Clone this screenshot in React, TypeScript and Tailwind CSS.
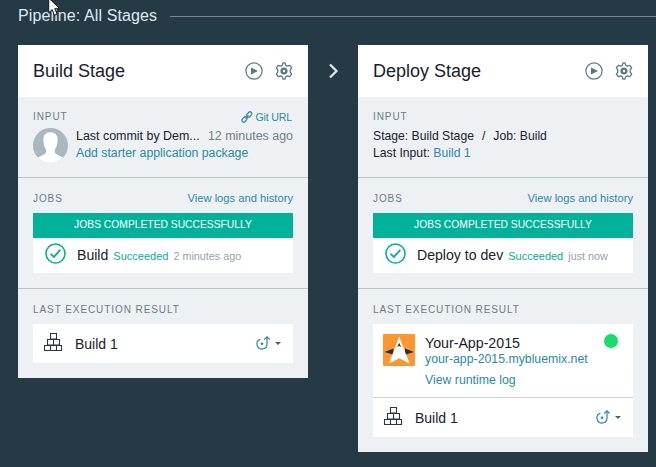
import type { ReactNode } from "react";

function PlayIcon() {
  return (
    <svg width="18" height="18" viewBox="0 0 18 18" fill="none">
      <circle cx="9" cy="9" r="8.1" stroke="#5c7d86" strokeWidth="1.2" />
      <path d="M6 5.4 13 9 6 12.6z" fill="#5a7680" />
    </svg>
  );
}

function GearIcon() {
  return (
    <svg width="18" height="18" viewBox="0 0 18 18" fill="none" stroke="#5c7780">
      <path
        d="M7.3 3.2 8 .9h2l.7 2.300 1.500.9 2.500-.7 2 2.500-1.500 1.900v2.400l1.500 1.900-2 2.500-2.500-.7-1.500.9-.7 2.300H8l-.7-2.300-1.500-.9-2.500.7-2-2.500 1.500-1.900V7.800L1.300 5.900l2-2.500 2.500.7z"
        strokeWidth="1.3"
        strokeLinejoin="round"
      />
      <circle cx="9" cy="9" r="2.400" strokeWidth="2.400" />
    </svg>
  );
}

function LinkIcon() {
  return (
    <svg width="12" height="12" viewBox="0 0 12 12" fill="none" stroke="#3f87a0" strokeWidth="1.300">
      <rect x="-2.9" y="-1.8" width="5.8" height="3.6" rx="1.8" transform="translate(8.3 3.5) rotate(-48)" />
      <rect x="-2.9" y="-1.8" width="5.8" height="3.6" rx="1.8" transform="translate(3.5 8.5) rotate(-48)" />
      <path d="M4.4 7.6 7.4 4.3" />
    </svg>
  );
}

function Avatar() {
  return (
    <svg width="35" height="35" viewBox="0 0 35 35" className="shrink-0">
      <defs>
        <clipPath id="avatar">
          <circle cx="17.5" cy="17.5" r="17.5" />
        </clipPath>
      </defs>
      <g clipPath="url(#avatar)">
        <rect width="35" height="35" fill="#a9b8bf" />
        <path
          d="M17.5 4.300c4.700 0 7.200 3 7.100 7.500 0 4-.7 6.500-2.100 8.700-.8 1.200-.8 3.300-.2 4.500 1 2 5.700 2.800 7.700 4.800V36H5v-6.200c2-2 6.700-2.800 7.700-4.800.6-1.200.6-3.300-.2-4.500-1.400-2.200-2.100-4.700-2.100-8.700-.1-4.500 2.400-7.500 7.100-7.500z"
          fill="#fff"
        />
      </g>
    </svg>
  );
}

function CheckIcon() {
  return (
    <svg width="21" height="21" viewBox="0 0 21 21" fill="none" stroke="#0bae98">
      <circle cx="10.500" cy="10.500" r="9.500" strokeWidth="1.600" />
      <path d="M5.600 10.900 8.900 14l6.400-7.200" strokeWidth="1.900" />
    </svg>
  );
}

function BlocksIcon() {
  return (
    <svg width="20" height="20" viewBox="0 0 20 20" fill="none" stroke="#2c3540" strokeWidth="1.100">
      <path d="M7.500 1.500h6v5.500h-6zM4.500 7.500h12v5.500h-12zM10.500 7.500v5.500M1.500 13.500h17v5h-17zM7.500 13.500v5M13.500 13.500v5" />
    </svg>
  );
}

function DeployMenu() {
  return (
    <div className="flex items-center gap-[5px]">
      <svg width="14" height="14" viewBox="0 0 14 14" fill="none" stroke="#2c87a3" strokeWidth="1.200" className="mb-[2px]">
        <path d="M4.300 3.300A5 5 0 1 0 11 8V1.300" />
        <path d="M8.300 3.500 11 .9l2.600 2.600" />
        <circle cx="6" cy="7.700" r="1.300" fill="#1f86a8" stroke="none" />
      </svg>
      <svg width="6" height="3" viewBox="0 0 6 3">
        <path d="M0 0h6L3 3z" fill="#47616c" />
      </svg>
    </div>
  );
}

function AppLogo() {
  return (
    <svg width="32" height="32" viewBox="0 0 32 32" className="shrink-0">
      <rect width="32" height="32" rx="1" fill="#ff9630" />
      <path d="M1.500 18 10.500 14.500v6.300zM31 18l-9-3.500v6.300z" fill="#263238" />
      <path d="M16.200 2.500 26.500 29.500l-10.200-5.200L6 29.500z" fill="#fff" />
      <path d="M16.200 8.800 18.200 13l-2-.9-2 .9z" fill="#263238" />
    </svg>
  );
}

function Stage({ title, children }: { title: string; children: ReactNode }) {
  return (
    <section className="w-[290px] shrink-0 bg-[#eef1f4]">
      <header className="flex h-[52px] items-center bg-white pr-[15px] pl-[15px]">
        <h2 className="flex-1 text-[18px] text-[#17222b]">{title}</h2>
        <div className="flex gap-3">
          <PlayIcon />
          <GearIcon />
        </div>
      </header>
      {children}
    </section>
  );
}

function Label({ children }: { children: ReactNode }) {
  return <h3 className="text-[10px] leading-4 tracking-[0.92px] text-[#6b7b82]">{children}</h3>;
}

function Jobs({ name, time }: { name: string; time: string }) {
  return (
    <div className="h-[111px] border-b border-[#b7c4c9] px-[15px] pt-[13px]">
      <div className="flex h-[22px] items-start justify-between">
        <Label>JOBS</Label>
        <a className="text-[11.200px] leading-[14px] text-[#2a8aa8]">View logs and history</a>
      </div>
      <div className="h-[25px] bg-[#00b299] text-center text-[10.300px] leading-6 text-white">
        JOBS COMPLETED SUCCESSFULLY
      </div>
      <div className="flex h-[35px] bg-white pt-[5px] pl-3">
        <CheckIcon />
        <div className="flex items-baseline pl-[11px] leading-6">
          <span className="text-[14.100px] text-[#17222b]">{name}</span>
          <span className="ml-[5px] text-[11px] text-[#08ae94]">Succeeded</span>
          <span className="ml-[5px] text-[10.800px] text-[#94a2a8]">{time}</span>
        </div>
      </div>
    </div>
  );
}

function BuildRow() {
  return (
    <div className="flex h-[39px] items-center bg-white pr-3 pl-2.5">
      <div className="pb-[3px]">
        <BlocksIcon />
      </div>
      <span className="ml-3 flex-1 pt-[2px] text-[14px] text-[#17222b]">Build 1</span>
      <DeployMenu />
    </div>
  );
}

export default function App() {
  return (
    <main className="relative h-[467px] w-[656px] overflow-hidden bg-[#263a45] font-['Liberation_Sans',Arial,sans-serif] whitespace-nowrap">
      <div className="flex h-[45px] items-start pl-[18px]">
        <h1 className="text-[16px] leading-[31px] tracking-[0.11px] text-[#dfe9ee]">Pipeline: All Stages</h1>
        <div className="mt-4 ml-[13px] h-px flex-1 bg-[#7c868c]" />
      </div>
      <div className="flex items-start pl-[18px]">
        <Stage title="Build Stage">
          <div className="h-[81px] border-b border-[#b7c4c9] px-[15px] pt-3">
            <div className="flex justify-between">
              <Label>INPUT</Label>
              <a className="flex items-center gap-[2px] pr-px text-[10.600px] leading-[15px] tracking-[-0.150px] text-[#2a8aa8]">
                <LinkIcon />
                Git URL
              </a>
            </div>
            <div className="flex pt-[3px]">
              <Avatar />
              <div className="flex-1 pl-2 text-[12.350px] leading-[17px]">
                <div className="flex justify-between">
                  <span className="text-[12.450px] text-[#17222b]">Last commit by Dem...</span>
                  <span className="text-[12.450px] text-[#718087]">12 minutes ago</span>
                </div>
                <a className="text-[12.300px] text-[#2a8aa8]">Add starter application package</a>
              </div>
            </div>
          </div>
          <Jobs name="Build" time="2 minutes ago" />
          <div className="px-[15px] pt-[13px] pb-[15px]">
            <div className="h-[22px]">
              <Label>LAST EXECUTION RESULT</Label>
            </div>
            <BuildRow />
          </div>
        </Stage>
        <div className="flex h-[52px] w-[50px] shrink-0 items-center justify-center">
          <svg width="12" height="16" viewBox="0 0 12 16" fill="none" stroke="#dce5e9" strokeWidth="2.300">
            <path d="M3 1.500 9.500 8 3 14.500" />
          </svg>
        </div>
        <Stage title="Deploy Stage">
          <div className="h-[81px] border-b border-[#b7c4c9] px-[15px] pt-3">
            <Label>INPUT</Label>
            <div className="pt-[3px] text-[12.200px] leading-[17px] text-[#17222b]">
              <div className="flex">
                <span>Stage: Build Stage</span>
                <span className="mx-2">/</span>
                <span>Job: Build</span>
              </div>
              <div>
                Last Input: <a className="text-[#2a8aa8]">Build 1</a>
              </div>
            </div>
          </div>
          <Jobs name="Deploy to dev" time="just now" />
          <div className="px-[15px] pt-[13px] pb-[15px]">
            <div className="h-[22px]">
              <Label>LAST EXECUTION RESULT</Label>
            </div>
            <div className="flex h-[74px] items-start border-b border-[#c9d2d5] bg-white pt-2.5 pr-[15px] pl-2.5">
              <AppLogo />
              <div className="flex flex-1 flex-col pl-2.5 text-[12.300px] text-[#2a8aa8]">
                <span className="text-[14.200px] leading-[18px] text-[#17222b]">Your-App-2015</span>
                <a className="leading-[14px]">your-app-2015.mybluemix.net</a>
                <a className="pt-[5px] leading-[18px]">View runtime log</a>
              </div>
              <span className="size-3.5 rounded-full bg-[#15de6b]" />
            </div>
            <BuildRow />
          </div>
        </Stage>
      </div>
      <svg className="absolute top-0 left-[48px]" width="14" height="17" viewBox="0 0 14 17">
        <path d="M.7-2v14.800l3.400-3.200 2.300 5.600 2.700-1.100-2.300-5.400h4.900z" fill="#fff" stroke="#10151b" strokeWidth="1" />
      </svg>
    </main>
  );
}
